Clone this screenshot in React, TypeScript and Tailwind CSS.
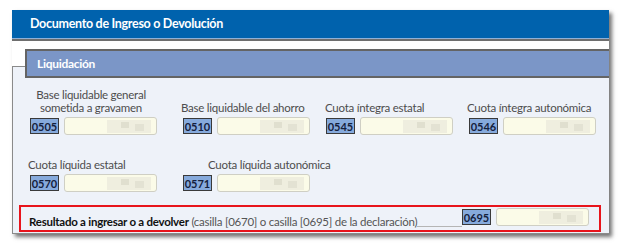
import React from "react";

const F = { fontFamily: "Lato, 'Noto Sans', sans-serif" };

function Badge({ code }: { code: string }) {
  return (
    <div className="w-[29px] h-[16px] bg-[#86aadc] border border-[#3a3a3a] flex items-center justify-center text-[11px] font-bold text-[#14213d] leading-none tracking-normal">
      {code}
    </div>
  );
}

function Field() {
  return (
    <div className="relative w-[93px] h-[18px] rounded-[3px] border border-[#cfcfc4] bg-[#fbfbe8] overflow-hidden">
      <div className="absolute left-[42px] top-[2px] w-[44px] h-[13px] bg-[#ecebdc] opacity-80" />
      <div className="absolute left-[56px] top-[4px] w-[8px] h-[6px] bg-[#e0dfcf]" />
      <div className="absolute left-[70px] top-[6px] w-[9px] h-[7px] bg-[#e3e2d3]" />
    </div>
  );
}

function Block({ code }: { code: string }) {
  return (
    <div className="flex items-center gap-[5px]">
      <Badge code={code} />
      <Field />
    </div>
  );
}

export default function App() {
  return (
    <div className="w-[620px] h-[247px] bg-white pt-[10px] pl-[12px]" style={F}>
      <div className="w-[597px] h-[224px] flex flex-col shadow-[3px_3px_4px_rgba(0,0,0,0.55)] bg-white">
        <div className="h-[28px] bg-[#0062ad] flex items-center pl-[18px] pt-[2px] text-white font-bold text-[12.5px] tracking-[-0.3px]">
          Documento de Ingreso o Devolución
        </div>
        <div className="h-[1px] bg-[#8fb0d6]" />
        <div className="h-[2px] bg-[#6e6e6e]" />
        <div className="h-[9px] bg-white" />
        <div className="relative z-10 ml-[13px] h-[29px] bg-[#7b96c7] border-t-2 border-b-2 border-l-2 border-[#646464] flex items-center pl-[10px] text-white font-bold text-[12px] tracking-[-0.3px]">
          Liquidación
        </div>
        <div className="-mt-[12px] flex-1 bg-[#eef2f9] border-t border-l border-b border-[#8a8a8a] pt-[21px] pl-[16px] pr-[8px] pb-[1px] flex flex-col">
          <div className="flex text-[11.5px] leading-[13px] tracking-[-0.25px] text-[#4d4d4d] pl-[1px]">
            <div className="w-[153px] flex flex-col justify-end">
              <div className="w-[122px] text-center">Base liquidable general<br />sometida a gravamen</div>
              <div className="mt-[3px]"><Block code="0505" /></div>
            </div>
            <div className="w-[143px] flex flex-col justify-end">
              <div className="-ml-[2px] whitespace-nowrap">Base liquidable del ahorro</div>
              <div className="mt-[3px]"><Block code="0510" /></div>
            </div>
            <div className="w-[143px] flex flex-col justify-end">
              <div className="-ml-[1px] whitespace-nowrap">Cuota íntegra estatal</div>
              <div className="mt-[3px]"><Block code="0545" /></div>
            </div>
            <div className="flex flex-col justify-end">
              <div className="-ml-[2px] whitespace-nowrap">Cuota íntegra autonómica</div>
              <div className="mt-[3px]"><Block code="0546" /></div>
            </div>
          </div>
          <div className="flex text-[11.5px] leading-[13px] tracking-[-0.25px] text-[#4d4d4d] pl-[1px] mt-[23px]">
            <div className="w-[153px] flex flex-col">
              <div className="-ml-[2px] whitespace-nowrap">Cuota líquida estatal</div>
              <div className="mt-[3px]"><Block code="0570" /></div>
            </div>
            <div className="flex flex-col">
              <div className="ml-[25px] whitespace-nowrap">Cuota líquida autonómica</div>
              <div className="mt-[3px]"><Block code="0571" /></div>
            </div>
          </div>
          <div className="mt-[13px] -ml-[10px] border-2 border-[#e8141c] h-[27px] flex items-end pl-[8px] pr-[10px] pb-[4px]">
            <div className="text-[11.5px] leading-[13px] tracking-[-0.25px] whitespace-nowrap -mb-[2px]">
              <span className="font-bold text-[#111]">Resultado a ingresar o a devolver</span>{" "}
              <span className="text-[#555]">(casilla [0670] o casilla [0695] de la declaración)</span>
            </div>
            <div className="flex-1 border-b border-[#b5b5b5] -mb-[1px] self-end" />
            <Block code="0695" />
          </div>
        </div>
      </div>
    </div>
  );
}
